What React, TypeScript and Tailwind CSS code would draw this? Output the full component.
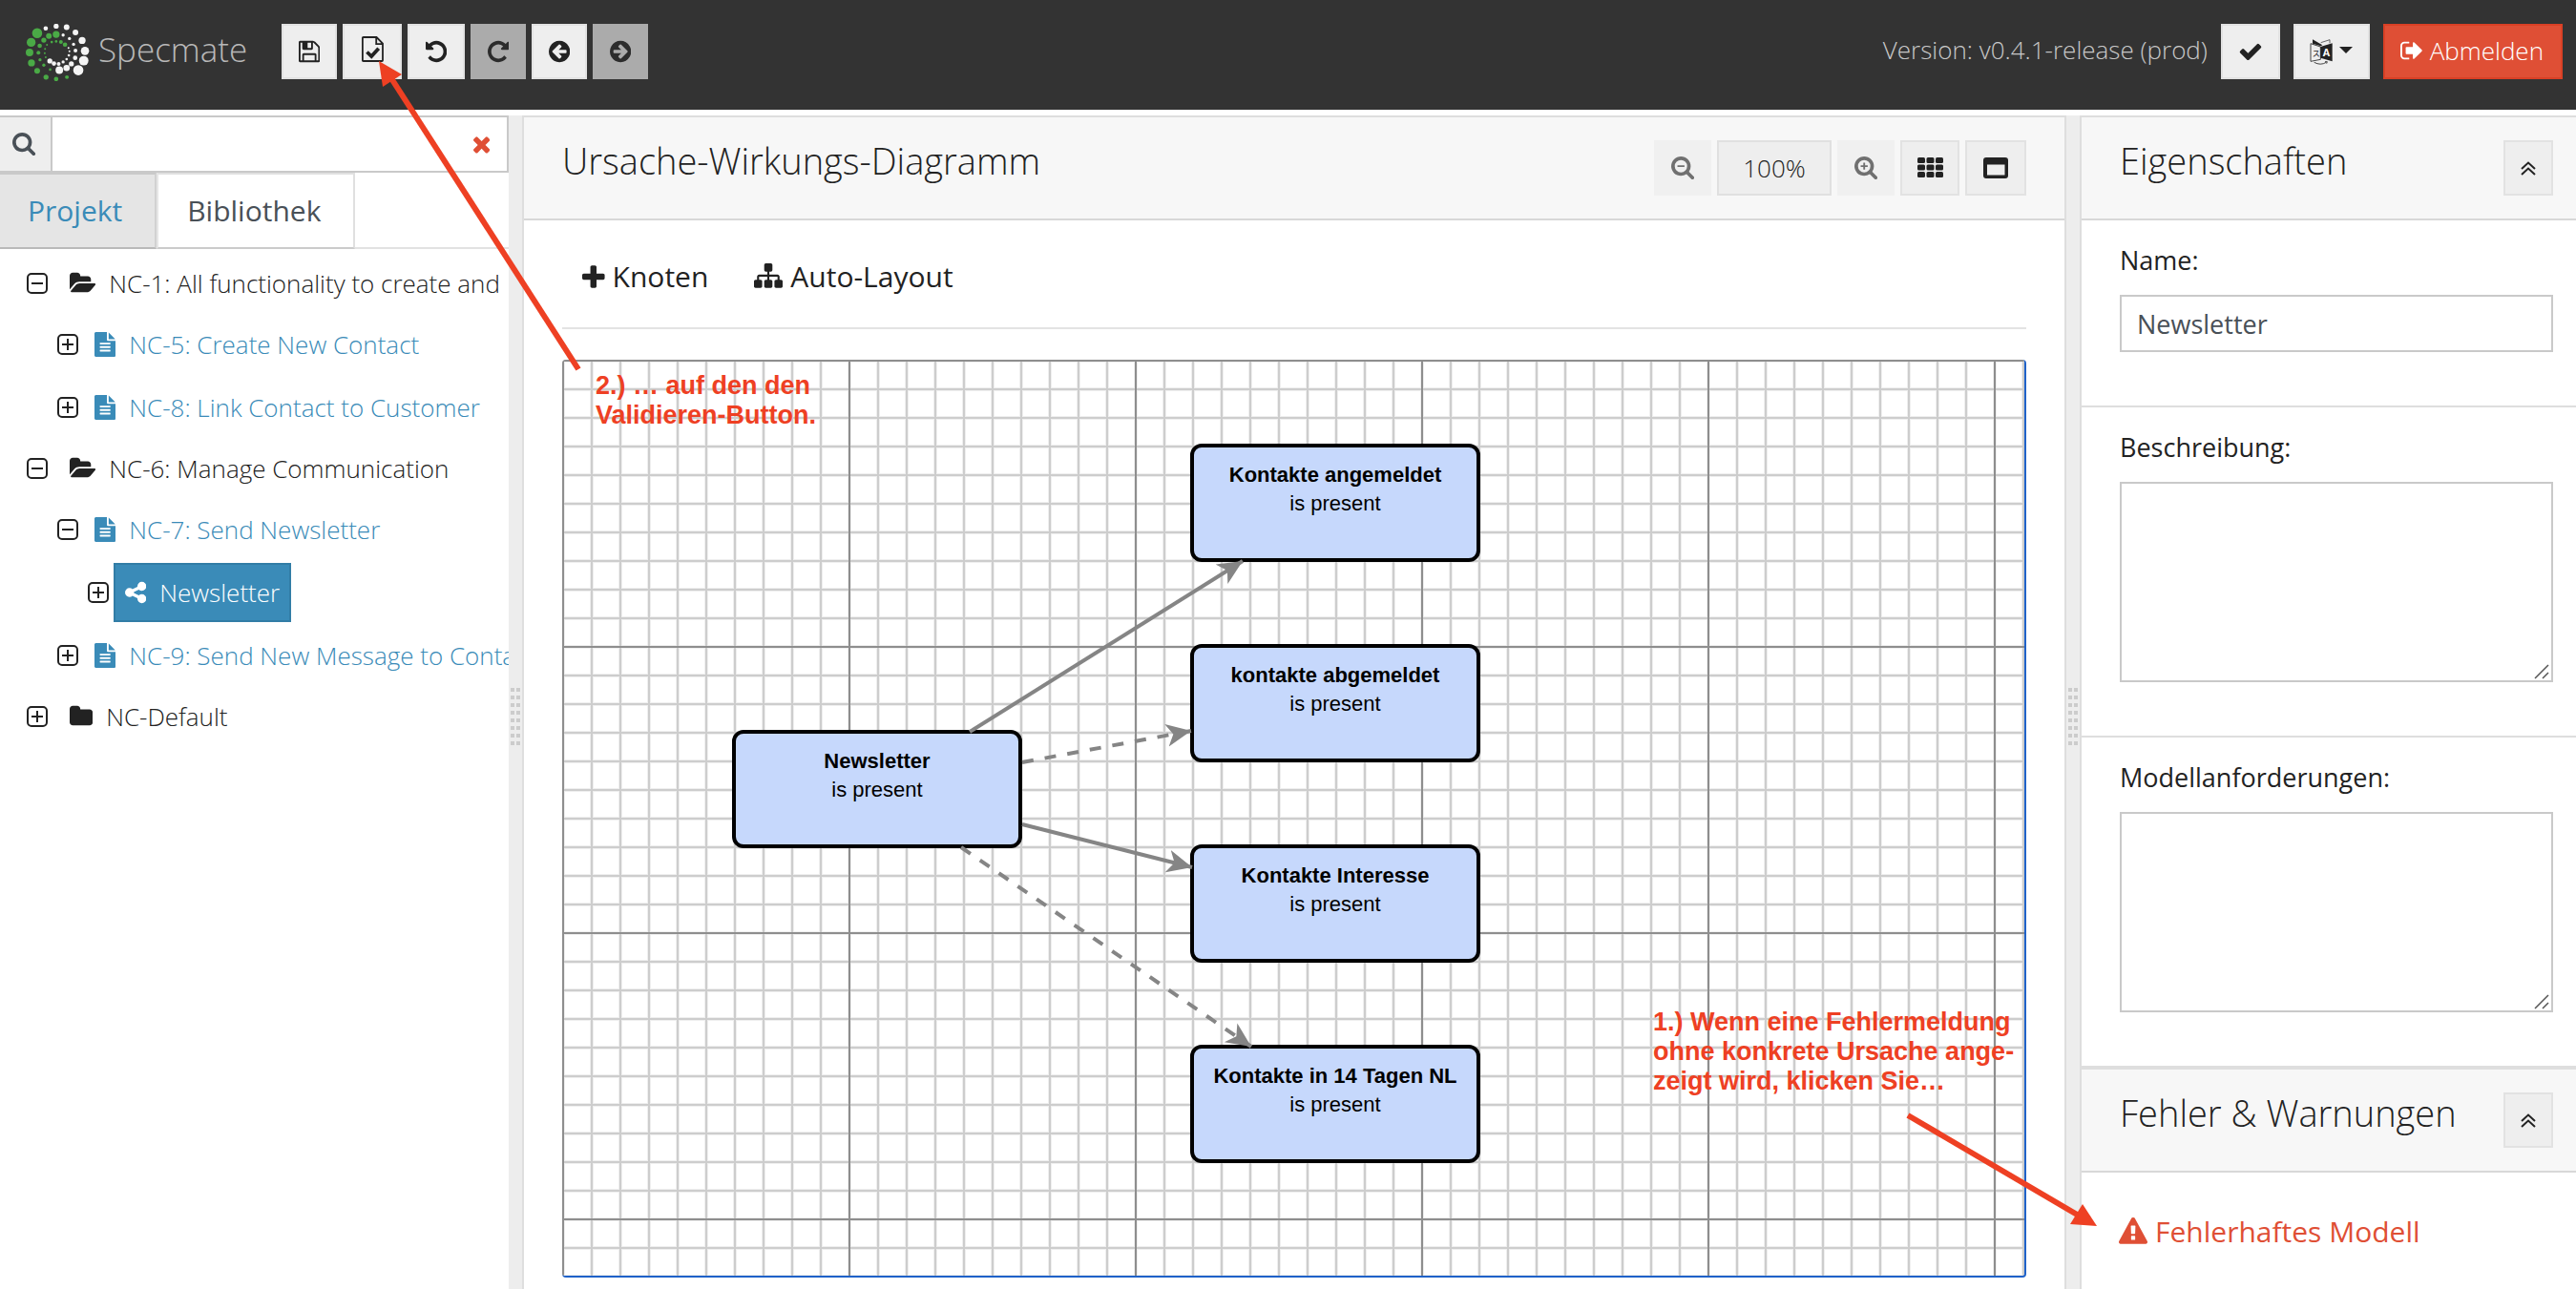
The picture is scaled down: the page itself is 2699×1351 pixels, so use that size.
import type { ReactNode } from 'react';

const CIRCLE =
  'm0 0M1664 896q0 209-103 385.5t-279.5 279.5-385.5 103-385.5-103-279.5-279.5-103-385.5 103-385.5 279.5-279.5 385.5-103 385.5 103 279.5 279.5 103 385.5z';

const GLYPHS = {
  save: ['128 0 1536 1792', 'M512 1536h768v-384h-768v384zm896 0h128v-896q0-14-10-38.5t-20-34.5l-281-281q-10-10-34-20t-39-10v416q0 40-28 68t-68 28h-576q-40 0-68-28t-28-68v-416h-128v1280h128v-416q0-40 28-68t68-28h832q40 0 68 28t28 68v416zm-384-928v-320q0-13-9.5-22.5t-22.5-9.5h-192q-13 0-22.5 9.5t-9.5 22.5v320q0 13 9.5 22.5t22.5 9.5h192q13 0 22.5-9.5t9.5-22.5zm640 32v928q0 40-28 68t-68 28h-1344q-40 0-68-28t-28-68v-1344q0-40 28-68t68-28h928q40 0 88 20t76 48l280 280q28 28 48 76t20 88z'],
  undo: ['128 0 1536 1792', 'M1664 896q0 156-61 298t-164 245-245 164-298 61q-172 0-327-72.5t-264-204.5q-7-10-6.5-22.5t8.5-20.5l137-138q10-9 25-9 16 2 23 12 73 95 179 147t225 52q104 0 198.5-40.5t163.5-109.5 109.5-163.5 40.5-198.5-40.5-198.5-109.5-163.5-163.5-109.5-198.5-40.5q-98 0-188 35.5t-160 101.5l137 138q31 30 14 69-17 40-59 40h-448q-26 0-45-19t-19-45v-448q0-42 40-59 39-17 69 14l130 129q107-101 244.5-156.5t284.5-55.5q156 0 298 61t245 164 164 245 61 298z'],
  redo: ['128 0 1536 1792', 'M1664 256v448q0 26-19 45t-45 19h-448q-42 0-59-40-17-39 14-69l138-138q-148-137-349-137-104 0-198.5 40.5t-163.5 109.5-109.5 163.5-40.5 198.5 40.5 198.5 109.5 163.5 163.5 109.5 198.5 40.5q119 0 225-52t179-147q7-10 23-12 15 0 25 9l137 138q9 8 9.5 20.5t-7.5 22.5q-109 132-264 204.5t-327 72.5q-156 0-298-61t-245-164-164-245-61-298 61-298 164-245 245-164 298-61q147 0 284.5 55.5t244.5 156.5l130-129q29-31 70-14 39 17 39 59z'],
  back: ['128 0 1536 1792', 'M1408 960v-128q0-26-19-45t-45-19h-502l189-189q19-19 19-45t-19-45l-91-91q-18-18-45-18t-45 18l-362 362-91 91q-18 18-18 45t18 45l91 91 362 362q18 18 45 18t45-18l91-91q18-18 18-45t-18-45l-189-189h502q26 0 45-19t19-45z' + CIRCLE],
  forward: ['128 0 1536 1792', 'M1413 896q0-27-18-45l-91-91-362-362q-18-18-45-18t-45 18l-91 91q-18 18-18 45t18 45l189 189h-502q-26 0-45 19t-19 45v128q0 26 19 45t45 19h502l-189 189q-19 19-19 45t19 45l91 91q18 18 45 18t45-18l362-362 91-91q18-18 18-45z' + CIRCLE],
  check: ['0 0 1792 1792', 'M1671 566q0 40-28 68l-724 724-136 136q-28 28-68 28t-68-28l-136-136-362-362q-28-28-28-68t28-68l136-136q28-28 68-28t68 28l294 295 656-657q28-28 68-28t68 28l136 136q28 28 28 68z'],
  signOut: ['64 0 1568 1792', 'M704 1440q0 4 1 20t.5 26.5-3 23.5-10 19.5-20.5 6.5h-320q-119 0-203.5-84.5t-84.5-203.5v-704q0-119 84.5-203.5t203.5-84.5h320q13 0 22.5 9.5t9.5 22.5q0 4 1 20t.5 26.5-3 23.5-10 19.5-20.5 6.5h-320q-66 0-113 47t-47 113v704q0 66 47 113t113 47h312l11.5 1 11.5 3 8 5.5 7 9 2 13.5zm928-544q0 26-19 45l-544 544q-19 19-45 19t-45-19-19-45v-288h-448q-26 0-45-19t-19-45v-384q0-26 19-45t45-19h448v-288q0-26 19-45t45-19 45 19l544 544q19 19 19 45z'],
  search: ['64 64 1664 1792', 'M1216 832q0-185-131.5-316.5t-316.5-131.5-316.5 131.5-131.5 316.5 131.5 316.5 316.5 131.5 316.5-131.5 131.5-316.5zm512 832q0 52-38 90t-90 38q-54 0-90-38l-343-342q-179 124-399 124-143 0-273.5-55.5t-225-150-150-225-55.5-273.5 55.5-273.5 150-225 225-150 273.5-55.5 273.5 55.5 225 150 150 225 55.5 273.5q0 220-124 399l343 343q37 37 37 90z'],
  zoomIn: ['64 64 1664 1792', 'M1024 800v64q0 13-9.5 22.5t-22.5 9.5h-160v160q0 13-9.5 22.5t-22.5 9.5h-64q-13 0-22.5-9.5t-9.5-22.5v-160h-160q-13 0-22.5-9.5t-9.5-22.5v-64q0-13 9.5-22.5t22.5-9.5h160v-160q0-13 9.5-22.5t22.5-9.5h64q13 0 22.5 9.5t9.5 22.5v160h160q13 0 22.5 9.5t9.5 22.5zM1216 832q0-185-131.5-316.5t-316.5-131.5-316.5 131.5-131.5 316.5 131.5 316.5 316.5 131.5 316.5-131.5 131.5-316.5zm512 832q0 53-37.5 90.5t-90.5 37.5q-54 0-90-38l-343-342q-179 124-399 124-143 0-273.5-55.5t-225-150-150-225-55.5-273.5 55.5-273.5 150-225 225-150 273.5-55.5 273.5 55.5 225 150 150 225 55.5 273.5q0 220-124 399l343 343q37 37 37 90z'],
  zoomOut: ['64 64 1664 1792', 'M1024 800v64q0 13-9.5 22.5t-22.5 9.5h-448q-13 0-22.5-9.5t-9.5-22.5v-64q0-13 9.5-22.5t22.5-9.5h448q13 0 22.5 9.5t9.5 22.5zM1216 832q0-185-131.5-316.5t-316.5-131.5-316.5 131.5-131.5 316.5 131.5 316.5 316.5 131.5 316.5-131.5 131.5-316.5zm512 832q0 53-37.5 90.5t-90.5 37.5q-54 0-90-38l-343-342q-179 124-399 124-143 0-273.5-55.5t-225-150-150-225-55.5-273.5 55.5-273.5 150-225 225-150 273.5-55.5 273.5 55.5 225 150 150 225 55.5 273.5q0 220-124 399l343 343q37 37 37 90z'],
  times: ['302 0 1188 1792', 'M1490 1322q0 40-28 68l-136 136q-28 28-68 28t-68-28l-294-294-294 294q-28 28-68 28t-68-28l-136-136q-28-28-28-68t28-68l294-294-294-294q-28-28-28-68t28-68l136-136q28-28 68-28t68 28l294 294 294-294q28-28 68-28t68 28l136 136q28 28 28 68t-28 68l-294 294 294 294q28 28 28 68z'],
  plus: ['192 -64 1408 1792', 'M1600 736v192q0 40-28 68t-68 28h-416v416q0 40-28 68t-68 28h-192q-40 0-68-28t-28-68v-416h-416q-40 0-68-28t-28-68v-192q0-40 28-68t68-28h416v-416q0-40 28-68t68-28h192q40 0 68 28t28 68v416h416q40 0 68 28t28 68z'],
  sitemap: ['0 64 1792 1792', 'M1792 1248v320q0 40-28 68t-68 28h-320q-40 0-68-28t-28-68v-320q0-40 28-68t68-28h96v-192h-512v192h96q40 0 68 28t28 68v320q0 40-28 68t-68 28h-320q-40 0-68-28t-28-68v-320q0-40 28-68t68-28h96v-192h-512v192h96q40 0 68 28t28 68v320q0 40-28 68t-68 28h-320q-40 0-68-28t-28-68v-320q0-40 28-68t68-28h96v-192q0-52 38-90t90-38h512v-192h-96q-40 0-68-28t-28-68v-320q0-40 28-68t68-28h320q40 0 68 28t28 68v320q0 40-28 68t-68 28h-96v192h512q52 0 90 38t38 90v192h96q40 0 68 28t28 68z'],
  folderOpen: ['0 0 1880 1792', 'M1879 952q0 31-31 66l-336 396q-43 51-120.5 86.5t-143.5 35.5h-1088q-34 0-60.5-13t-26.5-43q0-31 31-66l336-396q43-51 120.5-86.5t143.5-35.5h1088q34 0 60.5 13t26.5 43zm-343-344v160h-832q-94 0-197 47.5t-164 119.5l-337 396-5 6q0-4-.5-12.5t-.5-12.5v-960q0-92 66-158t158-66h320q92 0 158 66t66 158v32h544q92 0 158 66t66 158z'],
  folder: ['64 0 1664 1792', 'M1728 608v704q0 92-66 158t-158 66h-1216q-92 0-158-66t-66-158v-960q0-92 66-158t158-66h320q92 0 158 66t66 158v32h672q92 0 158 66t66 158z'],
  file: ['128 0 1536 1792', 'M1596 476q14 14 28 36h-472v-472q22 14 36 28zm-476 164h544v1056q0 40-28 68t-68 28h-1344q-40 0-68-28t-28-68v-1600q0-40 28-68t68-28h800v544q0 40 28 68t68 28zm160 736v-64q0-14-9-23t-23-9h-704q-14 0-23 9t-9 23v64q0 14 9 23t23 9h704q14 0 23-9t9-23zm0-256v-64q0-14-9-23t-23-9h-704q-14 0-23 9t-9 23v64q0 14 9 23t23 9h704q14 0 23-9t9-23zm0-256v-64q0-14-9-23t-23-9h-704q-14 0-23 9t-9 23v64q0 14 9 23t23 9h704q14 0 23-9t9-23z'],
  share: ['128 0 1536 1792', 'M1344 1024q133 0 226.5 93.5t93.5 226.5-93.5 226.5-226.5 93.5-226.5-93.5-93.5-226.5q0-12 2-34l-360-180q-92 86-218 86-133 0-226.5-93.5t-93.5-226.5 93.5-226.5 226.5-93.5q126 0 218 86l360-180q-2-22-2-34 0-133 93.5-226.5t226.5-93.5 226.5 93.5 93.5 226.5-93.5 226.5-226.5 93.5q-126 0-218-86l-360 180q2 22 2 34t-2 34l360 180q92-86 218-86z'],
  warning: ['0 0 1792 1792', 'M1024 1375v-190q0-14-9.5-23.5t-22.5-9.5h-192q-13 0-22.5 9.5t-9.5 23.5v190q0 14 9.5 23.5t22.5 9.5h192q13 0 22.5-9.5t9.5-23.5zm-2-374l18-459q0-12-10-19-13-11-24-11h-220q-11 0-24 11-10 7-10 21l17 457q0 10 10 16.5t24 6.5h185q14 0 23.5-6.5t10.5-16.5zm-14-934l768 1408q35 63-2 126-17 29-46.5 46t-63.5 17h-1536q-34 0-63.5-17t-46.5-46q-37-63-2-126l768-1408q17-31 47-49t65-18 65 18 47 49z'],
} as const;

type GlyphName = keyof typeof GLYPHS;

function Icon({ name, className = 'h-[26px]' }: { name: GlyphName; className?: string }) {
  const [viewBox, d] = GLYPHS[name];
  return (
    <svg viewBox={viewBox} className={`${className} w-auto shrink-0`} fill="currentColor" fillRule="evenodd" aria-hidden="true">
      <path d={d} />
    </svg>
  );
}

const WHITE_DOTS = [
  [96, 47, 7], [129, 40, 8], [162, 43, 9], [190, 60, 9], [211, 85, 11], [220, 118, 13], [216, 149, 15], [199, 179, 16],
  [151, 68, 5], [171, 79, 5], [184, 97, 5], [190, 117, 6], [189, 140, 7], [177, 159, 8], [162, 172, 10], [139, 179, 12],
  [168, 109, 3], [171, 119, 3], [169, 132, 4], [162, 144, 4], [151, 153, 5], [137, 159, 6], [122, 158, 7], [109, 150, 8],
];
const GREEN_DOTS = [
  [163, 201, 6], [129, 207, 7], [97, 201, 8], [69, 181, 9], [51, 156, 11], [45, 123, 12], [50, 91, 14], [69, 62, 16],
  [90, 84, 8], [106, 71, 9], [129, 66, 11], [77, 102, 7], [73, 124, 6], [78, 146, 5], [90, 163, 5], [110, 177, 4],
  [100, 99, 3], [115, 90, 4], [129, 88, 4], [144, 90, 6], [157, 98, 7], [94, 112, 3], [93, 125, 3], [96, 138, 3],
];

function Logo() {
  return (
    <a href="#" className="flex h-[60px] w-[231px] items-center gap-[9px]">
      <svg viewBox="33 33 202 180" className="h-[60px] w-[67px] shrink-0" aria-hidden="true">
        <g fill="#f4f4f4">{WHITE_DOTS.map(([x, y, r]) => <circle key={`${x}-${y}`} cx={x} cy={y} r={r} />)}</g>
        <g fill="#4aaa46">{GREEN_DOTS.map(([x, y, r]) => <circle key={`${x}-${y}`} cx={x} cy={y} r={r} />)}</g>
      </svg>
      <span className="pb-[7px] text-[35px] font-light leading-[48px] text-[#b8b8b8]">Specmate</span>
    </a>
  );
}

function ValidateIcon() {
  return (
    <svg viewBox="0 0 23 27" className="mb-[5px] h-[27px] w-[23px]" fill="none" stroke="currentColor" aria-hidden="true">
      <path d="M1.700 1h13.800L22 7.600V25.200q0 .8-.8.8H1.700q-.8 0-.8-.8V1.800q0-.8.8-.8zM15.200 1v7.200H22" strokeWidth="1.800" />
      <path d="M5.500 16.500l4.700 4.500 7.500-8.300" strokeWidth="3.800" />
    </svg>
  );
}

function LanguageIcon() {
  return (
    <svg viewBox="330 76 72 84" className="h-[28px] w-[24px]" fill="none" stroke="currentColor" aria-hidden="true">
      <path d="M333 93l31 10v40l-31 6z" strokeWidth="2.500" />
      <path d="M364 103l37-11v57l-37-11z" fill="currentColor" stroke="none" />
      <path d="M339 80v13l26 8 5-3z" fill="currentColor" stroke="none" />
      <path d="M365 90l28-9v11" strokeWidth="2" />
      <path d="M344 152q20 11 38 0M378 150l7 0-2 6" strokeWidth="2.500" />
      <text x="338" y="134" fontSize="24" fill="currentColor" stroke="none" fontFamily="Noto Sans CJK SC, sans-serif">ス</text>
      <text x="371" y="134" fontSize="32" fontWeight="bold" fill="#fff" stroke="none" fontFamily="Open Sans, sans-serif">A</text>
    </svg>
  );
}

function ToolButton({ label, width, disabled, children }: { label: string; width: string; disabled?: boolean; children: ReactNode }) {
  const look = disabled ? 'border-[#ababab] bg-[#ababab] text-[#2c2c2c]' : 'border-[#e2e2e2] bg-[#eeeeee] text-[#222]';
  return (
    <button type="button" aria-label={label} title={label} disabled={disabled} className={`flex h-[58px] items-center justify-center border-2 ${width} ${look}`}>
      {children}
    </button>
  );
}

function TopBar() {
  return (
    <header className="flex h-[115px] shrink-0 items-start justify-between bg-[#333] pl-[27px] pr-[14px] pt-[25px]">
      <div className="flex items-start gap-[37px]">
        <Logo />
        <div className="flex gap-[6px]">
          <ToolButton label="Speichern" width="w-[58px]"><Icon name="save" /></ToolButton>
          <ToolButton label="Validieren" width="w-[62px]"><ValidateIcon /></ToolButton>
          <ToolButton label="Rückgängig" width="w-[60px]"><Icon name="undo" /></ToolButton>
          <ToolButton label="Wiederholen" width="w-[58px]" disabled><Icon name="redo" /></ToolButton>
          <ToolButton label="Zurück" width="w-[58px]"><Icon name="back" /></ToolButton>
          <ToolButton label="Vorwärts" width="w-[58px]" disabled><Icon name="forward" /></ToolButton>
        </div>
      </div>
      <div className="flex items-center gap-[14px]">
        <span className="pb-[5px] text-[26px] font-light leading-9 text-[#c8c8c8]">Version: v0.4.1-release (prod)</span>
        <ToolButton label="Status" width="w-[62px]"><Icon name="check" /></ToolButton>
        <button type="button" aria-label="Sprache" className="flex h-[58px] w-20 items-center justify-center gap-[7px] border-2 border-[#e2e2e2] bg-[#eee] text-[#222]">
          <LanguageIcon />
          <svg viewBox="0 0 14 7" className="mb-1 h-[7px] w-[14px]" fill="currentColor" aria-hidden="true"><path d="M0 0h14L7 7z" /></svg>
        </button>
        <button type="button" className="flex h-[58px] items-center gap-2 border-2 border-[#da4025] bg-[#df4f35] pb-[2px] pl-4 pr-[18px] text-[26px] font-light text-white">
          <Icon name="signOut" />
          Abmelden
        </button>
      </div>
    </header>
  );
}

function Toggle({ open, label }: { open: boolean; label: string }) {
  return (
    <button type="button" aria-label={`${label} ${open ? 'zuklappen' : 'aufklappen'}`} aria-expanded={open} className="shrink-0 text-[#222]">
      <svg viewBox="0 0 22 22" className="size-[22px]" fill="none" stroke="currentColor" strokeWidth="2" aria-hidden="true">
        <rect x="1" y="1" width="20" height="20" rx="4" />
        <path d={open ? 'M5 11h12' : 'M5 11h12M11 5v12'} />
      </svg>
    </button>
  );
}

type Row = { text: string; level: 0 | 1 | 2; icon: GlyphName; open?: boolean; spaced?: boolean; selected?: boolean };
const ROWS: Row[] = [
  { text: 'NC-1: All functionality to create and', level: 0, icon: 'folderOpen', open: true },
  { text: 'NC-5: Create New Contact', level: 1, icon: 'file' },
  { text: 'NC-8: Link Contact to Customer', level: 1, icon: 'file', spaced: true },
  { text: 'NC-6: Manage Communication', level: 0, icon: 'folderOpen', open: true },
  { text: 'NC-7: Send Newsletter', level: 1, icon: 'file', open: true },
  { text: 'Newsletter', level: 2, icon: 'share', spaced: true, selected: true },
  { text: 'NC-9: Send New Message to Contact', level: 1, icon: 'file', spaced: true },
  { text: 'NC-Default', level: 0, icon: 'folder' },
];
const INDENT = ['pl-[28px]', 'pl-[60px]', 'pl-[92px]'];

function TreeRow({ row }: { row: Row }) {
  const base = 'flex h-[62px] items-center gap-[14px] whitespace-nowrap border-2';
  let content;
  if (row.level === 0) {
    content = <span className={`${base} border-transparent pl-4 text-[#222]`}><Icon name={row.icon} />{row.text}</span>;
  } else if (row.selected) {
    content = <a href="#" aria-current="page" className={`${base} border-[#327da6] bg-[#3a8bb8] px-[10px] text-white`}><Icon name={row.icon} />{row.text}</a>;
  } else {
    content = <a href="#" className={`${base} border-transparent px-[10px] text-[#3a8bb8]`}><Icon name={row.icon} />{row.text}</a>;
  }
  return (
    <li className={`flex h-16 items-center gap-[5px] text-[26px] font-light ${INDENT[row.level]} ${row.spaced ? 'mt-[2px]' : ''}`}>
      <Toggle open={!!row.open} label={row.text} />
      {content}
    </li>
  );
}

function Explorer() {
  return (
    <aside className="min-w-0 overflow-hidden bg-white">
      <div className="flex h-[60px] border-y-2 border-r-2 border-[#c9c9c9]">
        <label htmlFor="search" aria-label="Suche" className="flex w-[55px] shrink-0 items-center justify-center border-r-2 border-[#c9c9c9] bg-[#eee] pr-[2px] text-[#495057]">
          <Icon name="search" />
        </label>
        <input id="search" type="text" aria-label="Suche" className="min-w-0 flex-1 px-4 text-[26px] outline-none" />
        <button type="button" aria-label="Suche leeren" className="flex items-center px-[18px] text-[#df4f35]"><Icon name="times" /></button>
      </div>
      <div role="tablist" className="flex h-20 text-[30px] leading-10">
        <button type="button" role="tab" aria-selected="true" className="border-y-2 border-r-2 border-b-[#b9b9b9] border-r-[#d2d2d2] border-t-[#c9c9c9] bg-[#e5e5e5] pl-[29px] pr-[34px] text-[#3a8bb8]">Projekt</button>
        <button type="button" role="tab" aria-selected="false" className="border-2 border-b-[#cbcbcb] border-l-[#e6e6e6] border-r-[#e0e0e0] border-t-[#e0e0e0] pl-[30px] pr-[34px] text-[#495057]">Bibliothek</button>
        <div className="flex-1 border-b-2 border-[#e2e2e2]" />
      </div>
      <ul className="pt-1">
        {ROWS.map((row) => <TreeRow key={row.text} row={row} />)}
      </ul>
    </aside>
  );
}

function Splitter() {
  return (
    <div role="separator" aria-orientation="vertical" className="flex items-center justify-center bg-[#ededed] pt-[30px]">
      <div className="grid grid-cols-2 gap-x-[2px] gap-y-1">
        {Array.from({ length: 16 }, (_, i) => <span key={i} className="size-1 bg-[#ccc]" />)}
      </div>
    </div>
  );
}

function PanelHeader({ title, children }: { title: string; children: ReactNode }) {
  return (
    <div className="flex h-[110px] shrink-0 items-start justify-between border-y-2 border-b-[#d8d8d8] border-t-[#dedede] bg-[#f7f7f7] pl-10">
      <h2 className="mt-[19px] text-[38px] font-light leading-[52px] text-[#222]">{title}</h2>
      <div className="mt-6 flex gap-[6px]">{children}</div>
    </div>
  );
}

const NODES = [
  { name: 'Newsletter', place: 'left-[178px] top-[388px]' },
  { name: 'Kontakte angemeldet', place: 'left-[658px] top-[88px]' },
  { name: 'kontakte abgemeldet', place: 'left-[658px] top-[298px]' },
  { name: 'Kontakte Interesse', place: 'left-[658px] top-[508px]' },
  { name: 'Kontakte in 14 Tagen NL', place: 'left-[658px] top-[718px]' },
];
const NOTE = "absolute whitespace-nowrap font-['Liberation_Sans',Arial,sans-serif] text-[27px] font-bold leading-[31px] text-[#ee4023]";

function Diagram() {
  return (
    <div className="relative mx-10 mb-3 flex-1 overflow-hidden rounded-[4px] border-b-2 border-r-2 border-[#1f62c9] bg-white">
      <svg className="absolute inset-0 size-full" aria-hidden="true">
        <defs>
          <pattern id="minor" x="-14" y="-14" width="30" height="30" patternUnits="userSpaceOnUse">
            <path d="M15 0v30M0 15h30" stroke="#efefef" strokeWidth="4" />
            <path d="M15 0v30M0 15h30" stroke="#cdcdcd" strokeWidth="2" />
          </pattern>
          <pattern id="major" x="-149" y="-149" width="300" height="300" patternUnits="userSpaceOnUse">
            <path d="M150 0v300M0 150h300" stroke="#8e8e8e" strokeWidth="2" />
          </pattern>
        </defs>
        <rect width="100%" height="100%" fill="url(#minor)" />
        <rect width="100%" height="100%" fill="url(#major)" />
      </svg>
      {NODES.map((node) => (
        <div key={node.name} className={`absolute h-[124px] w-[304px] whitespace-nowrap rounded-[12px] border-4 border-black bg-[#c6d8fc] pt-[14px] text-center font-['Liberation_Sans',Arial,sans-serif] text-[22px] leading-[30px] text-black ${node.place}`}>
          <p className="font-bold">{node.name}</p>
          <p>is present</p>
        </div>
      ))}
      <svg className="pointer-events-none absolute inset-0 size-full" fill="none" stroke="#858585" strokeWidth="4" aria-hidden="true">
        <defs>
          <marker id="arrow" markerUnits="userSpaceOnUse" markerWidth="26" markerHeight="26" refX="26" refY="12" orient="auto">
            <path d="M0 0L26 12 0 24 7 12z" fill="#858585" stroke="none" />
          </marker>
        </defs>
        <path d="M427 390L713 211" markerEnd="url(#arrow)" />
        <path d="M482 422L659 389" strokeDasharray="12 12" markerEnd="url(#arrow)" />
        <path d="M482 487L660 532" markerEnd="url(#arrow)" />
        <path d="M418 511L722 720" strokeDasharray="12 12" markerEnd="url(#arrow)" />
      </svg>
      <p className={`${NOTE} left-[35px] top-[12px]`}>2.) … auf den den<br />Validieren-Button.</p>
      <p className={`${NOTE} left-[1143px] top-[679px]`}>1.) Wenn eine Fehlermeldung<br />ohne konkrete Ursache ange-<br />zeigt wird, klicken Sie…</p>
    </div>
  );
}

function Editor() {
  const zoom = 'flex h-[58px] w-[60px] items-center justify-center bg-[#f0f0f0] text-[#707070]';
  return (
    <main className="flex min-w-0 flex-col border-x-2 border-[#dedede] bg-white">
      <PanelHeader title="Ursache-Wirkungs-Diagramm">
        <button type="button" aria-label="Verkleinern" className={zoom}><Icon name="zoomOut" /></button>
        <button type="button" className="h-[58px] w-[120px] border-2 border-[#e0e0e0] bg-[#eee] text-[26px] font-light text-[#222]">100%</button>
        <button type="button" aria-label="Vergrößern" className={zoom}><Icon name="zoomIn" /></button>
        <ToolButton label="Raster" width="w-[62px]">
          <svg viewBox="0 0 27 21" className="mb-[2px] h-[21px] w-[27px]" fill="currentColor" aria-hidden="true">
            {[0, 9.5, 19].map((x) => [0, 7.5, 15].map((y) => <rect key={`${x}-${y}`} x={x} y={y} width="8" height="6" rx="1.500" />))}
          </svg>
        </ToolButton>
        <div className="mr-10">
          <ToolButton label="Maximieren" width="w-[64px]">
            <svg viewBox="0 0 26 22" className="h-[22px] w-[26px]" aria-hidden="true">
              <path d="M3 0h20q3 0 3 3v16q0 3-3 3H3q-3 0-3-3V3q0-3 3-3zM4 7.500v11h18.500v-11z" fill="currentColor" fillRule="evenodd" />
            </svg>
          </ToolButton>
        </div>
      </PanelHeader>
      <div className="mx-10 mb-8 flex h-[114px] shrink-0 items-center gap-[6px] border-b-2 border-[#e3e3e3] pt-[5px] text-[30px] leading-10 text-[#222]">
        <button type="button" className="flex items-center gap-2 px-[21px]"><Icon name="plus" className="h-[30px]" />Knoten</button>
        <button type="button" className="flex items-center gap-2 px-[21px]"><Icon name="sitemap" className="h-[30px]" />Auto-Layout</button>
      </div>
      <Diagram />
    </main>
  );
}

function CollapseButton({ label }: { label: string }) {
  return (
    <div className="mr-6">
      <ToolButton label={`${label} einklappen`} width="w-[52px]">
        <svg viewBox="0 0 16 15" className="h-[15px] w-4" fill="none" stroke="currentColor" strokeWidth="2" aria-hidden="true">
          <path d="M1 8l7-6.500L15 8M1 14l7-6.500L15 14" />
        </svg>
      </ToolButton>
    </div>
  );
}

function Field({ id, label, value }: { id: string; label: string; value?: string }) {
  return (
    <div className="border-b-2 border-[#dedede] pb-14 pl-10 pr-6 pt-6">
      <label htmlFor={id} className="block text-[27px] leading-9 text-[#222]">{label}</label>
      {value !== undefined ? (
        <input id={id} type="text" defaultValue={value} className="mt-[18px] block h-[60px] w-full border-2 border-[#c9c9c9] bg-white px-4 text-[27px] text-[#495057]" />
      ) : (
        <div className="relative mt-[18px]">
          <textarea id={id} className="block h-[210px] w-full resize-none border-2 border-[#c9c9c9] bg-white p-4 text-[27px] text-[#495057]" />
          <svg viewBox="0 0 16 16" className="absolute bottom-[3px] right-[4px] size-4" stroke="#555" strokeWidth="1.500" aria-hidden="true">
            <path d="M1 15L15 1M9 15l6-6" />
          </svg>
        </div>
      )}
    </div>
  );
}

function Inspector() {
  return (
    <aside className="min-w-0 overflow-hidden border-l-2 border-[#dedede] bg-white">
      <PanelHeader title="Eigenschaften"><CollapseButton label="Eigenschaften" /></PanelHeader>
      <Field id="name" label="Name:" value="Newsletter" />
      <Field id="description" label="Beschreibung:" />
      <Field id="requirements" label="Modellanforderungen:" />
      <PanelHeader title="Fehler & Warnungen"><CollapseButton label="Fehler & Warnungen" /></PanelHeader>
      <p className="flex items-center gap-2 pl-[39px] pt-[42px] text-[30px] leading-10 text-[#df4f35]">
        <Icon name="warning" className="h-[30px]" />
        Fehlerhaftes Modell
      </p>
    </aside>
  );
}

export default function App() {
  return (
    <div className="relative flex h-screen flex-col overflow-hidden bg-white font-['Open_Sans','Noto_Sans',sans-serif]">
      <TopBar />
      <div className="mt-[6px] grid min-h-0 flex-1 grid-cols-[533fr_14px_1618fr_14px_520fr]">
        <Explorer />
        <Splitter />
        <Editor />
        <Splitter />
        <Inspector />
      </div>
      <svg className="pointer-events-none absolute inset-0 size-full" fill="#ee4023" stroke="#ee4023" aria-hidden="true">
        <path d="M606 387L408 79" strokeWidth="6" />
        <path d="M397 64l24 14-20 13z" stroke="none" />
        <path d="M1999 1169L2178 1274" strokeWidth="6" />
        <path d="M2197 1285l-28-2 13-21z" stroke="none" />
      </svg>
    </div>
  );
}
